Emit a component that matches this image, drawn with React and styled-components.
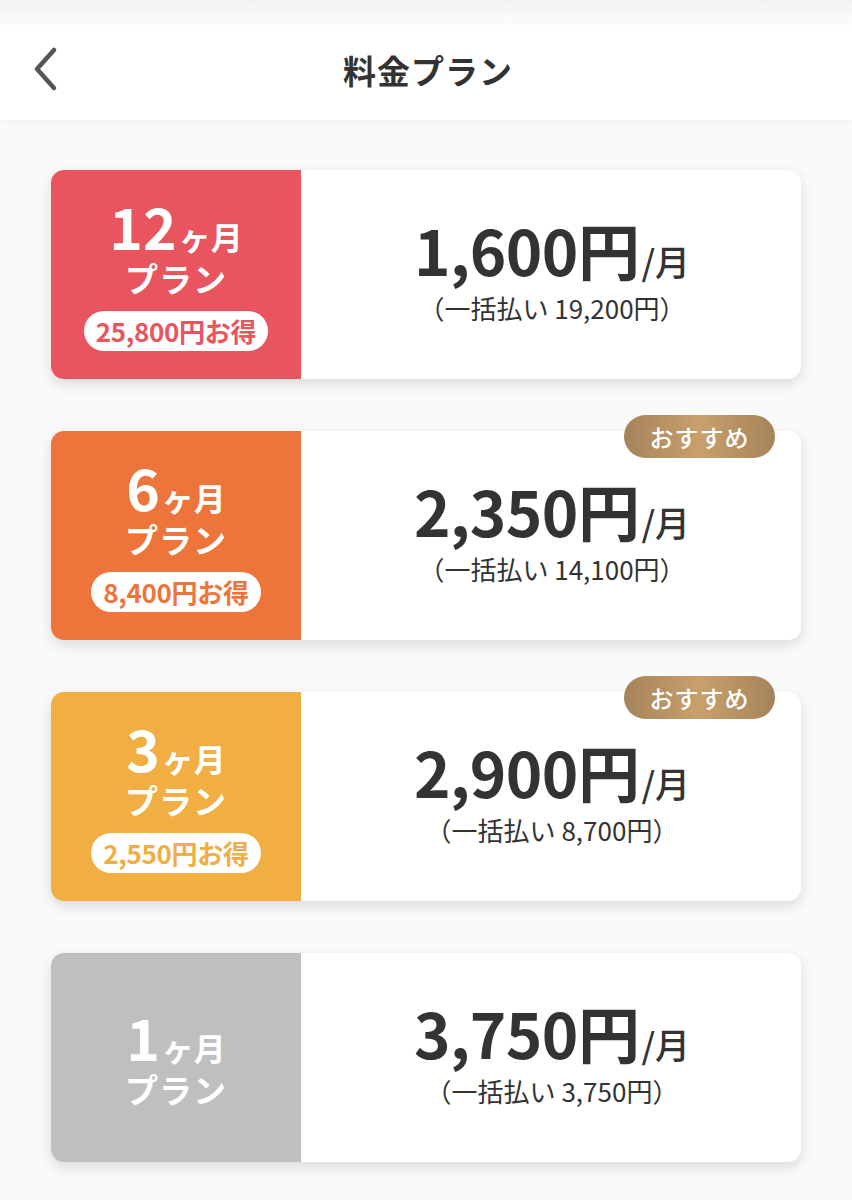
import React from 'react';
import styled, { createGlobalStyle } from 'styled-components';

const GlobalStyle = createGlobalStyle`
  * { box-sizing: border-box; }
  body {
    margin: 0;
    background: #fafafa;
    font-family: "Noto Sans CJK JP", "Noto Sans", sans-serif;
    color: #333;
  }
`;

const plans = [
  { months: '12', color: '#e9555f', save: '25,800円お得', price: '1,600', total: '19,200', recommend: false },
  { months: '6', color: '#ed753b', save: '8,400円お得', price: '2,350', total: '14,100', recommend: true },
  { months: '3', color: '#f0ae43', save: '2,550円お得', price: '2,900', total: '8,700', recommend: true },
  { months: '1', color: '#bfbfbf', save: null, price: '3,750', total: '3,750', recommend: false },
];

export default function App() {
  return (
    <>
      <GlobalStyle />
      <Header>
        <BackButton aria-label="戻る">
          <svg width="30" height="46" viewBox="0 0 30 46" fill="none">
            <path d="M24 4 L7 23 L24 42" stroke="#555" strokeWidth="4.5" strokeLinecap="round" strokeLinejoin="round" />
          </svg>
        </BackButton>
        <Title>料金プラン</Title>
      </Header>
      <List>
        {plans.map((p) => (
          <Card key={p.months}>
            {p.recommend && <Recommend>おすすめ</Recommend>}
            <PlanSide color={p.color}>
              <Months>
                <Num>{p.months}</Num>
                <Unit>ヶ月</Unit>
              </Months>
              <PlanLabel>プラン</PlanLabel>
              {p.save && <Save color={p.color}>{p.save}</Save>}
            </PlanSide>
            <PriceSide>
              <Price>
                <Amount>{p.price}円</Amount>
                <Per>/月</Per>
              </Price>
              <Total>（一括払い {p.total}円）</Total>
            </PriceSide>
          </Card>
        ))}
      </List>
    </>
  );
}

const Header = styled.header`
  position: relative;
  height: 120px;
  background: linear-gradient(#f3f3f3 0, #ffffff 34px);
  box-shadow: 0 2px 6px rgba(0, 0, 0, 0.04);
  display: flex;
  align-items: center;
  justify-content: center;
  padding-top: 20px;
`;

const BackButton = styled.button`
  position: absolute;
  left: 30px;
  top: 46px;
  border: 0;
  background: none;
  padding: 0;
  display: flex;
`;

const Title = styled.h1`
  margin: 0 0 0 4px;
  font-size: 33px;
  font-weight: 700;
  color: #333;
  letter-spacing: 1px;
  line-height: 1;
`;

const List = styled.main`
  display: flex;
  flex-direction: column;
  gap: 52px;
  padding: 50px 51px 40px;
`;

const Card = styled.section`
  position: relative;
  display: flex;
  height: 209px;
  background: #fff;
  border-radius: 13px;
  box-shadow: 0 5px 14px rgba(0, 0, 0, 0.13);
`;

const Recommend = styled.div`
  position: absolute;
  top: -16px;
  right: 26px;
  width: 151px;
  height: 43px;
  border-radius: 22px;
  background: linear-gradient(90deg, #a5835a 0%, #c8a06c 50%, #a5835a 100%);
  color: #fff;
  font-size: 24px;
  font-weight: 500;
  letter-spacing: 1px;
  display: flex;
  align-items: center;
  justify-content: center;
`;

const PlanSide = styled.div`
  width: 250px;
  flex-shrink: 0;
  background: ${(p) => p.color};
  border-radius: 13px 0 0 13px;
  color: #fff;
  display: flex;
  flex-direction: column;
  align-items: center;
  justify-content: center;
  padding-top: 2px;
`;

const Months = styled.div`
  display: flex;
  align-items: baseline;
  line-height: 0.9;
`;

const Num = styled.span`
  font-size: 57px;
  font-weight: 700;
`;

const Unit = styled.span`
  font-size: 32px;
  font-weight: 700;
  margin-left: 2px;
`;

const PlanLabel = styled.div`
  font-size: 33px;
  font-weight: 700;
  line-height: 1;
  margin-top: 10px;
  letter-spacing: 1px;
`;

const Save = styled.div`
  margin-top: 16px;
  background: #fff;
  color: ${(p) => p.color};
  border-radius: 20px;
  height: 40px;
  padding: 0 12px;
  font-size: 26px;
  font-weight: 700;
  letter-spacing: -0.3px;
  display: flex;
  align-items: center;
`;

const PriceSide = styled.div`
  flex: 1;
  display: flex;
  flex-direction: column;
  align-items: center;
  justify-content: center;
  padding-bottom: 8px;
  padding-left: 2px;
`;

const Price = styled.div`
  display: flex;
  align-items: baseline;
  line-height: 1;
  color: #333;
`;

const Amount = styled.span`
  font-size: 62px;
  font-weight: 700;
  letter-spacing: -0.5px;
`;

const Per = styled.span`
  font-size: 35px;
  font-weight: 500;
  margin-left: 2px;
`;

const Total = styled.div`
  font-size: 26px;
  line-height: 1.2;
  color: #333;
  margin-top: 12px;
`;
